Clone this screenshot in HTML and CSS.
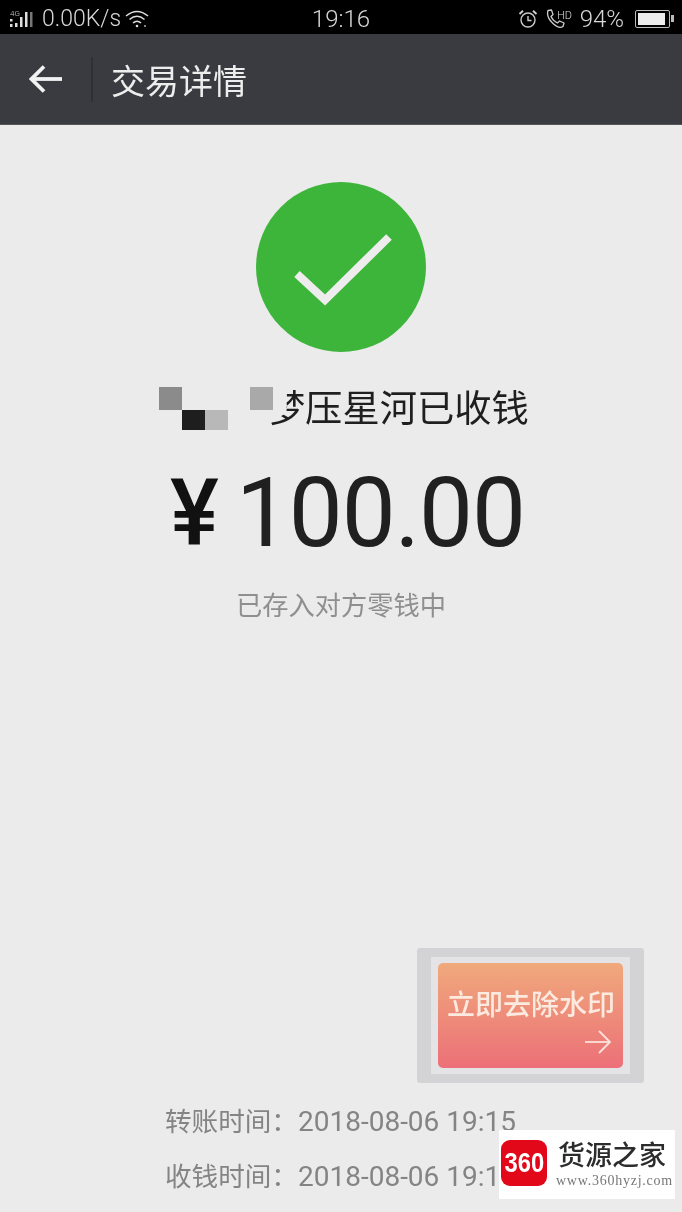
FILE: index.html
```html
<!DOCTYPE html>
<html lang="zh-CN">
<head>
    <meta charset="UTF-8">
    <meta name="viewport" content="width=device-width, initial-scale=1.0">
    <title>交易详情</title>
    <link rel="stylesheet" href="styles.css">
</head>
<body>
    <div class="phone">
        <!-- 状态栏 -->
        <div class="status-bar">
            <div class="status-left">
                <svg class="signal" width="26" height="20" viewBox="0 0 26 20">
                    <text x="0" y="7" class="signal-label">4G</text>
                    <rect x="0" y="10" width="2.500" height="2.500" fill="#ddd"/>
                    <rect x="0" y="15" width="2.500" height="3" fill="#ddd"/>
                    <rect x="5" y="14" width="2.500" height="4" fill="#ddd"/>
                    <rect x="10" y="8" width="2.500" height="10" fill="#ddd"/>
                    <rect x="15" y="3" width="2.500" height="15" fill="#ddd"/>
                    <rect x="20" y="3" width="2.500" height="15" fill="#777"/>
                </svg>
                <span>0.00K/s</span>
                <svg class="wifi" width="24" height="20" viewBox="0 0 24 20" fill="none" stroke="#ddd" stroke-width="1.600">
                    <path d="M1 7 Q12 -2 23 7"/>
                    <path d="M4.500 10.500 Q12 4 19.500 10.500"/>
                    <path d="M8 14 Q12 10.500 16 14"/>
                    <circle cx="12" cy="17" r="1.300" fill="#ddd" stroke="none"/>
                    <circle cx="20" cy="17" r="1" fill="#aaa" stroke="none"/>
                </svg>
            </div>
            <div class="status-time">19:16</div>
            <div class="status-right">
                <svg width="20" height="20" viewBox="0 0 20 20" fill="none" stroke="#ccc" stroke-width="1.400">
                    <circle cx="10" cy="11" r="7"/>
                    <path d="M10 7 V11.500 H13.500"/>
                    <path d="M1.500 5 L5 1.800 M18.500 5 L15 1.800" stroke-width="2"/>
                </svg>
                <svg width="28" height="20" viewBox="0 0 28 20" fill="none" stroke="#ccc" stroke-width="1.300">
                    <path d="M3 1.500 L6.500 1 L8 5.500 L6 7.500 Q8 12 12.500 14 L14.500 12 L19 14 L18 17.500 Q14 20 8 14.500 Q1 8 3 1.500 Z"/>
                    <text x="12" y="10" class="hd-label">HD</text>
                </svg>
                <span class="battery-text">94%</span>
                <div class="battery"><div class="battery-level"></div></div>
            </div>
        </div>

        <!-- 标题栏 -->
        <div class="nav-bar">
            <svg class="back" width="34" height="30" viewBox="0 0 34 30" fill="none" stroke="#f2f2f2" stroke-width="3.800">
                <path d="M33 15 H3"/>
                <path d="M15 2.500 L2.500 15 L15 27.500"/>
            </svg>
            <div class="nav-divider"></div>
            <div class="nav-title">交易详情</div>
        </div>

        <div class="main">
            <svg class="ok-icon" width="170" height="170" viewBox="0 0 170 170">
                <circle cx="85" cy="85" r="85" fill="#3db53b"/>
                <path d="M41 92 L69 118 L133 55" fill="none" stroke="#eeeced" stroke-width="8"/>
            </svg>

            <div class="payee">
                <div class="mosaic">
                    <i class="tile-mid"></i><i></i><i></i><i></i><i class="tile-soft"></i>
                    <i></i><i class="tile-dark"></i><i class="tile-light"></i><i></i><i></i>
                </div>
                <span class="payee-cut">梦</span>
                <span>压星河已收钱</span>
            </div>

            <div class="amount"><span class="yen">¥</span><span class="digits">100.00</span></div>
            <div class="note">已存入对方零钱中</div>

            <div class="times">
                <div class="time-row">转账时间：<span class="time-value">2018-08-06 19:15</span></div>
                <div class="time-row">收钱时间：<span class="time-value">2018-08-06 19:1</span></div>
            </div>
        </div>

        <!-- 去水印按钮，盖在页面上 -->
        <div class="promo">
            <div class="promo-inner">
                <div class="promo-btn">
                    <div class="promo-text">立即去除水印</div>
                    <svg class="promo-arrow" width="28" height="26" viewBox="0 0 28 26" fill="none" stroke="#fbe3dc" stroke-width="1.800">
                        <path d="M1 13 H26"/>
                        <path d="M15 2 L26 13 L15 24"/>
                    </svg>
                </div>
            </div>
        </div>

        <!-- 水印 -->
        <div class="watermark">
            <div class="wm-logo"><span class="wm-digits">360</span></div>
            <div class="wm-text">
                <div class="wm-name">货源之家</div>
                <div class="wm-url">www.360hyzj.com</div>
            </div>
        </div>
    </div>
</body>
</html>
```

FILE: styles.css
```css
* {
    box-sizing: border-box;
}
html, body {
    margin: 0;
    padding: 0;
}
body {
    font-family: Roboto, "Noto Sans CJK SC", sans-serif;
    background-color: #ecebec;
}
/* 原图是压缩过的截图，略微模糊 */
.phone {
    position: relative;
    width: 682px;
    height: 1212px;
    overflow: hidden;
    background-color: #ecebec;
    filter: blur(0.4px);
}

/* 状态栏 */
.status-bar {
    display: grid;
    grid-template-columns: 1fr auto 1fr;
    align-items: center;
    height: 34px;
    padding: 3px 10px 0;
    background-color: #000;
    color: #d8d8d8;
    font-size: 23px;
    font-weight: 300;
}
.status-left {
    display: flex;
    align-items: center;
    gap: 6px;
}
.wifi {
    margin-left: -2px;
}
.status-time {
    font-size: 24px;
    font-weight: 300;
}
.status-right {
    display: flex;
    align-items: center;
    justify-content: flex-end;
    gap: 7px;
}
.battery-text {
    margin-right: 4px;
    font-size: 24px;
}
.signal-label {
    font-size: 8px;
    fill: #ccc;
}
.hd-label {
    font-size: 11px;
    fill: #ddd;
    stroke: none;
}
.battery {
    position: relative;
    width: 35px;
    height: 18px;
    margin-right: 2px;
    padding: 2px;
    border: 1.500px solid #bbb;
    border-radius: 2px;
}
.battery::after {
    content: "";
    position: absolute;
    right: -5px;
    top: 4px;
    width: 3px;
    height: 7px;
    background-color: #bbb;
}
.battery-level {
    width: 94%;
    height: 100%;
    background-color: #ececec;
}

/* 标题栏 */
.nav-bar {
    display: flex;
    align-items: center;
    height: 91px;
    padding: 0 0 0 29px;
    background-color: #3a3b40;
    border-bottom: 1px solid #55565a;
}
.nav-divider {
    width: 2px;
    height: 45px;
    margin-left: 28px;
    background-color: #2f3034;
}
.nav-title {
    margin-left: 18px;
    font-size: 34px;
    color: #ededed;
}

/* 中间内容 */
.main {
    display: flex;
    flex-direction: column;
    align-items: center;
    padding-top: 57px;
}
.ok-icon {
    display: block;
}
.payee {
    display: flex;
    align-items: center;
    height: 44px;
    margin-top: 32px;
    padding-left: 6px;
    font-size: 37.300px;
    color: #1f1f1f;
}
.mosaic {
    display: grid;
    grid-template-columns: repeat(5, 22.800px);
    grid-template-rows: 23px 20px;
    align-self: flex-start;
    width: 109px;
    height: 43px;
    margin-top: 3px;
}
.tile-mid {
    background-color: #8b8b8b;
}
.tile-soft {
    background-color: #a9a9a9;
}
.tile-dark {
    background-color: #1e1e1e;
}
.tile-light {
    background-color: #b8b8b8;
}
.payee-cut {
    width: 37px;
    clip-path: polygon(50% 0, 100% 0, 100% 100%, 0 100%, 0 85%, 50% 62%);
}
.amount {
    display: flex;
    align-items: center;
    height: 100px;
    margin-top: 35px;
    padding-left: 13px;
    color: #202020;
}
.digits {
    font-size: 96px;
    font-weight: 400;
    letter-spacing: -1px;
}
.yen {
    margin-right: 17px;
    font-size: 92px;
    font-weight: 500;
    color: #111;
}
.note {
    margin-top: 22px;
    font-size: 26.250px;
    color: #8f8f8f;
}
.times {
    align-self: flex-start;
    margin-top: 471px;
    padding-left: 165px;
}
.time-row {
    height: 55px;
    line-height: 55px;
    font-size: 26.600px;
    color: #848484;
    white-space: nowrap;
}
.time-value {
    font-size: 28px;
}

/* 去水印按钮 */
.promo {
    position: absolute;
    left: 417px;
    top: 948px;
    width: 227px;
    height: 135px;
    padding: 9px 14px;
    background-color: #d3d3d5;
    border-radius: 3px;
}
.promo-inner {
    height: 100%;
    padding: 6px 7px;
    background-color: #e4e4e6;
}
.promo-btn {
    position: relative;
    height: 105px;
    padding: 25px 0 0 9px;
    background: linear-gradient(#f0a97c, #ec7078);
    border-radius: 5px;
}
.promo-text {
    font-size: 28px;
    font-weight: 500;
    line-height: 36px;
    color: #fbeadf;
    white-space: nowrap;
}
.promo-arrow {
    position: absolute;
    right: 11px;
    bottom: 13px;
}

/* 水印 */
.watermark {
    position: absolute;
    left: 499px;
    top: 1130px;
    display: flex;
    width: 176px;
    height: 69px;
    padding: 10px 0 0 2px;
    background-color: #fff;
}
.wm-logo {
    width: 46px;
    height: 46px;
    background-color: #e2081a;
    border-radius: 9px;
    color: #fff;
    font-family: "Liberation Sans", sans-serif;
    font-size: 28px;
    font-weight: 700;
    line-height: 46px;
    text-align: center;
}
.wm-digits {
    display: inline-block;
    transform: scaleX(0.85);
}
.wm-text {
    margin-left: 11px;
}
.wm-name {
    margin-top: -5px;
    font-family: "Noto Sans CJK SC", sans-serif;
    font-size: 27px;
    font-weight: 500;
    line-height: 38px;
    color: #2c2c2c;
    white-space: nowrap;
}
.wm-url {
    margin-top: 0;
    margin-left: -2px;
    font-family: "Liberation Serif", serif;
    font-size: 14px;
    line-height: 16px;
    letter-spacing: 0.750px;
    color: #777;
    white-space: nowrap;
}
```
